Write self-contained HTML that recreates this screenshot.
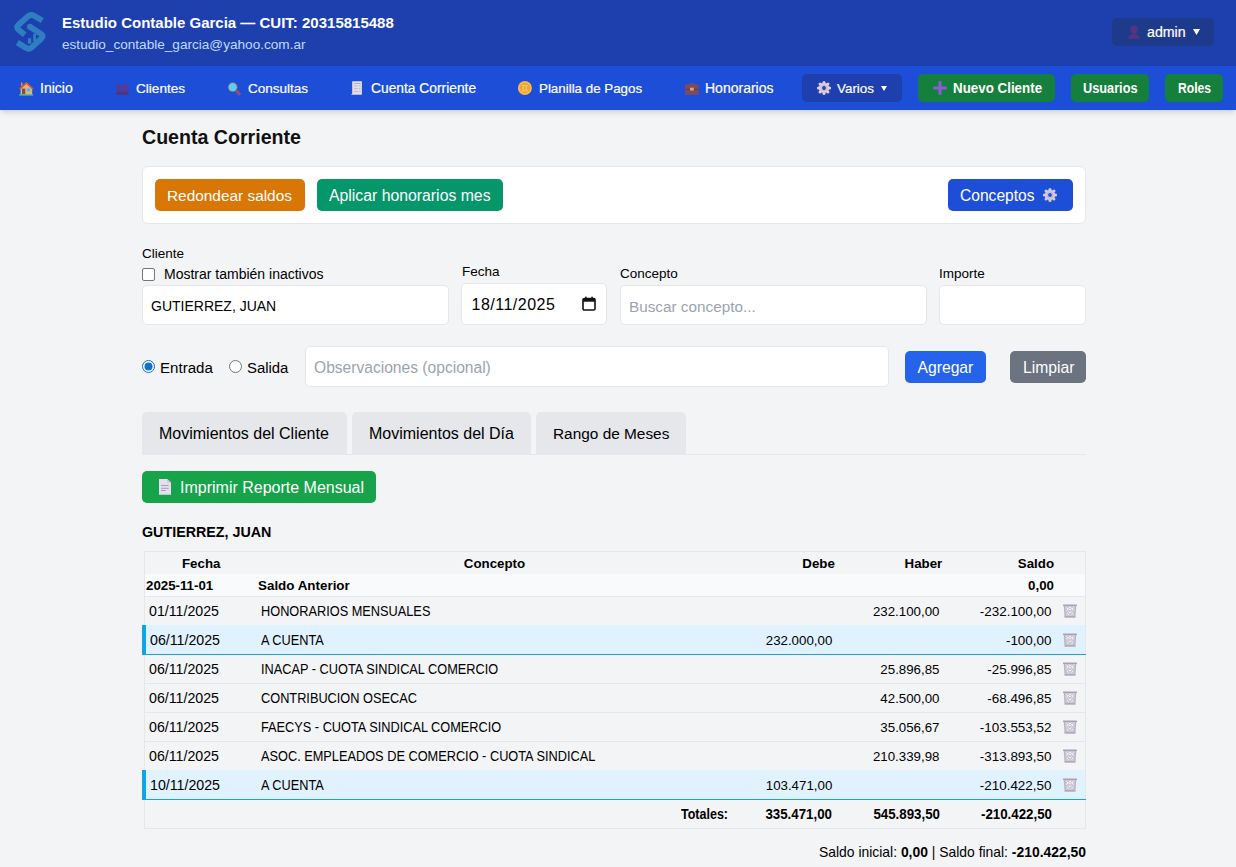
<!DOCTYPE html>
<html><head><meta charset="utf-8">
<style>
*{box-sizing:border-box}
html,body{margin:0;padding:0}
body{width:1236px;height:867px;overflow:hidden;position:relative;background:#f3f4f6;font-family:"Liberation Sans",sans-serif;color:#000}
.a{position:absolute}
.t{position:absolute;white-space:nowrap;line-height:1}
</style></head>
<body>
<div class="a" style="left:0px;top:0px;width:1236px;height:66px;background:#1e40af;"></div>
<svg class="a" style="left:8px;top:8px" width="44" height="48" viewBox="8 8 44 48">
<path d="M 42.32 20.55 L 34.07 15.84 Q 30.77 13.92 27.91 16.43 L 18.56 24.78 Q 15.70 27.29 18.63 29.72 L 24.72 34.78" fill="none" stroke="#2e7fc1" stroke-width="5.8" stroke-linejoin="round"/>
<path d="M 29.89 26.76 L 41.00 33.93 Q 44.19 35.96 41.37 38.51 L 31.72 47.30 Q 28.90 49.87 25.68 47.81 L 17.35 42.49" fill="none" stroke="#2e7fc1" stroke-width="5.8" stroke-linejoin="round"/>
<circle cx="29.89" cy="26.76" r="2.9" fill="#2e7fc1"/>
<rect x="27.9" y="38.2" width="3.3" height="5.5" fill="#2e7fc1"/>
<rect x="33.2" y="33.7" width="2.8" height="7.5" fill="#2e7fc1"/>
</svg>
<div class="t" style="left:62px;top:14.50px;font-size:15px;font-weight:700;color:#fff;">Estudio Contable Garcia — CUIT: 20315815488</div>
<div class="t" style="left:62px;top:37.50px;font-size:13.6px;color:#bfdbfe;">estudio_contable_garcia@yahoo.com.ar</div>
<div class="a" style="left:1112px;top:18px;width:102px;height:28px;background:#1e3a8a;border-radius:5px"></div>
<svg class="a" style="left:1127px;top:25px" width="14" height="14" viewBox="0 0 14 14">
<ellipse cx="7" cy="4.7" rx="3.8" ry="4.2" fill="#553380"/>
<path d="M0.9 13.8 C1.5 10.5 4 9 7 9 C10 9 12.5 10.5 13.1 13.8 Z" fill="#553380"/></svg>
<div class="t" style="left:1147px;top:25.00px;font-size:14.2px;color:#fff;-webkit-text-stroke:0.2px #fff;">admin</div>
<svg class="a" style="left:1193px;top:29px" width="7" height="6" viewBox="0 0 7 6"><path d="M0 0 H7 L3.5 6 Z" fill="#fff"/></svg>
<div class="a" style="left:0px;top:66px;width:1236px;height:44px;background:#1d4ed8;box-shadow:0 4px 6px -1px rgba(0,0,0,.1),0 2px 4px -2px rgba(0,0,0,.1)"></div>
<svg class="a" style="left:19px;top:81.5px" width="15" height="14" viewBox="0 0 15 14">
<rect x="2" y="0.5" width="1.5" height="4" fill="#d9894a"/>
<path d="M1.6 6.5 L7.4 1.2 L13.2 6.5 V12.6 H1.6 Z" fill="#e8b07e"/>
<path d="M0.8 7 L7.4 0.9 L14 7" fill="none" stroke="#e4542c" stroke-width="1.7" stroke-linejoin="round"/>
<rect x="3" y="6.6" width="3.3" height="6" fill="#7b5045"/>
<rect x="7.9" y="6.4" width="3.4" height="2.9" fill="#38bdf8"/>
<rect x="0.2" y="12.2" width="14" height="1.4" rx="0.7" fill="#4ade80"/></svg>
<div class="t" style="left:40px;top:81.00px;font-size:14px;color:#fff;-webkit-text-stroke:0.2px #fff;">Inicio</div>
<svg class="a" style="left:116px;top:84px" width="13" height="11" viewBox="0 0 13 11">
<path d="M0.3 11 V8.6 Q0.3 7.6 1.6 7.4 L3.2 7.2 L4.8 7.4 Q6.2 7.6 6.4 8.6 L6.6 7.6 Q6.8 7.4 8 7.3 L9.7 7.2 L11.2 7.4 Q12.7 7.6 12.7 8.6 V11 Z" fill="#4f3480"/>
<ellipse cx="3.3" cy="3.9" rx="3" ry="3.7" fill="#583a8e"/>
<ellipse cx="9.7" cy="3.9" rx="3" ry="3.7" fill="#583a8e"/>
</svg>
<div class="t" style="left:136px;top:82.00px;font-size:13.6px;color:#fff;-webkit-text-stroke:0.2px #fff;">Clientes</div>
<svg class="a" style="left:226px;top:81px" width="16" height="15" viewBox="0 0 16 15">
<line x1="10" y1="9.5" x2="13.3" y2="13" stroke="#9a4a7a" stroke-width="3" stroke-linecap="round"/>
<circle cx="6.7" cy="6.2" r="4.6" fill="#5ed0e6" stroke="#8b4a7a" stroke-width="0.8"/></svg>
<div class="t" style="left:248px;top:82.00px;font-size:13.5px;color:#fff;-webkit-text-stroke:0.2px #fff;">Consultas</div>
<svg class="a" style="left:351px;top:81px" width="11" height="14" viewBox="0 0 11 14">
<path d="M1.2 0.2 H10.9 V13.7 H0 L1.2 12.5 Z" fill="#e3dce9"/>
<rect x="3" y="2" width="6.5" height="0.8" fill="#a9a3b3"/>
<rect x="3" y="4.5" width="3.8" height="0.8" fill="#b9b3c3"/><rect x="7.8" y="4.5" width="1.7" height="0.8" fill="#b9b3c3"/>
<rect x="3" y="7.3" width="3.8" height="0.8" fill="#b9b3c3"/><rect x="7.8" y="7.3" width="1.7" height="0.8" fill="#b9b3c3"/>
<rect x="3" y="10.1" width="3.8" height="0.8" fill="#b9b3c3"/><rect x="7.8" y="10.1" width="1.7" height="0.8" fill="#b9b3c3"/></svg>
<div class="t" style="left:371px;top:82.00px;font-size:13.8px;color:#fff;-webkit-text-stroke:0.2px #fff;">Cuenta Corriente</div>
<svg class="a" style="left:517px;top:81px" width="16" height="15" viewBox="0 0 16 15">
<circle cx="7.9" cy="7" r="7" fill="#f6bb45"/><circle cx="7.9" cy="7" r="5" fill="#eca23c"/>
<rect x="5" y="4" width="5.8" height="1.2" fill="#f9c64d"/><rect x="5.6" y="5.2" width="1.4" height="3.8" fill="#f9c64d"/>
<rect x="8.6" y="5.2" width="1.4" height="3.8" fill="#f9c64d"/><rect x="4.6" y="9.2" width="6.6" height="1.2" fill="#f9c64d"/></svg>
<div class="t" style="left:539px;top:82.00px;font-size:13.35px;color:#fff;-webkit-text-stroke:0.2px #fff;">Planilla de Pagos</div>
<svg class="a" style="left:685px;top:83px" width="14" height="12" viewBox="0 0 14 12">
<path d="M4.8 2 V0.6 H9 V2" fill="none" stroke="#80505a" stroke-width="1"/>
<rect x="0" y="1.5" width="13.6" height="10.2" rx="0.6" fill="#7d4c5c"/>
<rect x="0.5" y="5.9" width="12.6" height="0.7" fill="#5c2f4a"/>
<rect x="5" y="4.7" width="3.8" height="2.8" fill="#f0a060"/></svg>
<div class="t" style="left:705px;top:81.00px;font-size:14px;color:#fff;-webkit-text-stroke:0.2px #fff;">Honorarios</div>
<div class="a" style="left:802px;top:74px;width:100px;height:28px;background:#1e40af;border-radius:5px"></div>
<svg class="a" style="left:816px;top:80px" width="16" height="16" viewBox="-8 -8 16 16"><g fill="#dccfe0" transform="scale(1.0)">
<circle r="5.1"/><rect x="-1.5" y="-7.1" width="3" height="14.2" rx="1.5"/><rect x="-1.5" y="-7.1" width="3" height="14.2" rx="1.5" transform="rotate(45)"/>
<rect x="-1.5" y="-7.1" width="3" height="14.2" rx="1.5" transform="rotate(90)"/><rect x="-1.5" y="-7.1" width="3" height="14.2" rx="1.5" transform="rotate(135)"/></g>
<circle r="3.1" fill="none" stroke="#c4b6cc" stroke-width="1"/><circle r="1.9" fill="#1e40af"/></svg>
<div class="t" style="left:837px;top:82.00px;font-size:13.4px;color:#fff;-webkit-text-stroke:0.2px #fff;">Varios</div>
<svg class="a" style="left:881px;top:86px" width="6" height="5" viewBox="0 0 6 5"><path d="M0 0 H6 L3 5 Z" fill="#fff"/></svg>
<div class="a" style="left:918px;top:74px;width:137px;height:28px;background:#15803d;border-radius:5px"></div>
<svg class="a" style="left:933px;top:81px" width="14" height="14" viewBox="0 0 14 14">
<rect x="5.5" y="0" width="3" height="14" rx="1.2" fill="#8b5cd6"/><rect x="0" y="5.5" width="14" height="3" rx="1.2" fill="#8b5cd6"/></svg>
<div class="t" style="left:953px;top:81.00px;font-size:14px;font-weight:700;color:#fff;transform:scaleX(0.954);transform-origin:0 0;">Nuevo Cliente</div>
<div class="a" style="left:1071px;top:74px;width:78px;height:28px;background:#15803d;border-radius:5px"></div>
<div class="t" style="left:1083px;top:81.00px;font-size:14px;font-weight:700;color:#fff;transform:scaleX(0.91);transform-origin:0 0;">Usuarios</div>
<div class="a" style="left:1165px;top:74px;width:58px;height:28px;background:#15803d;border-radius:5px"></div>
<div class="t" style="left:1178px;top:81.00px;font-size:14px;font-weight:700;color:#fff;transform:scaleX(0.866);transform-origin:0 0;">Roles</div>
<div class="t" style="left:142px;top:128.00px;font-size:19.6px;font-weight:700;color:#111;">Cuenta Corriente</div>
<div class="a" style="left:142px;top:166px;width:944px;height:58px;background:#fff;border:1px solid #e5e7eb;border-radius:6px"></div>
<div class="a" style="left:155px;top:179px;width:150px;height:32px;background:#d97706;border-radius:5px"></div>
<div class="t" style="left:167px;top:188.00px;font-size:15.4px;color:#fff;">Redondear saldos</div>
<div class="a" style="left:317px;top:179px;width:186px;height:32px;background:#059669;border-radius:5px"></div>
<div class="t" style="left:329px;top:188.00px;font-size:15.8px;color:#fff;">Aplicar honorarios mes</div>
<div class="a" style="left:948px;top:179px;width:125px;height:32px;background:#1d4ed8;border-radius:5px"></div>
<div class="t" style="left:960px;top:188.00px;font-size:15.6px;color:#fff;">Conceptos</div>
<svg class="a" style="left:1042px;top:187px" width="16" height="16" viewBox="-8 -8 16 16"><g fill="#d6cadb" transform="scale(1.0)">
<circle r="5.1"/><rect x="-1.5" y="-7.1" width="3" height="14.2" rx="1.5"/><rect x="-1.5" y="-7.1" width="3" height="14.2" rx="1.5" transform="rotate(45)"/>
<rect x="-1.5" y="-7.1" width="3" height="14.2" rx="1.5" transform="rotate(90)"/><rect x="-1.5" y="-7.1" width="3" height="14.2" rx="1.5" transform="rotate(135)"/></g>
<circle r="3.1" fill="none" stroke="#c4b6cc" stroke-width="1"/><circle r="1.9" fill="#1d4ed8"/></svg>
<div class="t" style="left:142px;top:247.00px;font-size:13.5px;">Cliente</div>
<div class="a" style="left:142px;top:268px;width:13px;height:13px;background:#fff;border:1px solid #767676;border-radius:2px"></div>
<div class="t" style="left:164px;top:267.00px;font-size:14px;">Mostrar también inactivos</div>
<div class="a" style="left:142px;top:285px;width:307px;height:40px;background:#fff;border:1px solid #e5e7eb;border-radius:5px"></div>
<div class="t" style="left:151px;top:299.00px;font-size:14px;">GUTIERREZ, JUAN</div>
<div class="t" style="left:462px;top:265.00px;font-size:13.5px;">Fecha</div>
<div class="a" style="left:461px;top:283px;width:146px;height:42px;background:#fff;border:1px solid #e5e7eb;border-radius:5px"></div>
<div class="t" style="left:471.5px;top:297.00px;font-size:16px;letter-spacing:0.5px;">18/11/2025</div>
<svg class="a" style="left:582px;top:296px" width="14" height="15" viewBox="0 0 14 15">
<rect x="1" y="2.5" width="12" height="11.5" rx="1.3" fill="none" stroke="#111" stroke-width="1.6"/>
<rect x="1" y="2.5" width="12" height="3.2" fill="#111"/>
<rect x="3.2" y="0.6" width="1.4" height="2.4" fill="#111"/><rect x="9.4" y="0.6" width="1.4" height="2.4" fill="#111"/></svg>
<div class="t" style="left:620px;top:267.00px;font-size:13.5px;">Concepto</div>
<div class="a" style="left:620px;top:285px;width:307px;height:40px;background:#fff;border:1px solid #e5e7eb;border-radius:5px"></div>
<div class="t" style="left:629px;top:298.50px;font-size:15.3px;color:#9ca3af;">Buscar concepto...</div>
<div class="t" style="left:939px;top:267.00px;font-size:13.5px;">Importe</div>
<div class="a" style="left:939px;top:285px;width:147px;height:40px;background:#fff;border:1px solid #e5e7eb;border-radius:5px"></div>
<svg class="a" style="left:142px;top:360px" width="13" height="13" viewBox="0 0 13 13">
<circle cx="6.5" cy="6.5" r="6" fill="#fff" stroke="#1170d8" stroke-width="1"/><circle cx="6.5" cy="6.5" r="4" fill="#1170d8"/></svg>
<div class="t" style="left:160px;top:360.00px;font-size:15.1px;">Entrada</div>
<svg class="a" style="left:229px;top:360px" width="13" height="13" viewBox="0 0 13 13">
<circle cx="6.5" cy="6.5" r="6" fill="#fff" stroke="#767676" stroke-width="1"/></svg>
<div class="t" style="left:247px;top:361.00px;font-size:14.9px;">Salida</div>
<div class="a" style="left:305px;top:346px;width:584px;height:41px;background:#fff;border:1px solid #e5e7eb;border-radius:5px"></div>
<div class="t" style="left:314px;top:360.30px;font-size:15.6px;color:#9ca3af;">Observaciones (opcional)</div>
<div class="a" style="left:905px;top:351px;width:81px;height:32px;background:#2563eb;border-radius:5px"></div>
<div class="t" style="left:917.5px;top:360.10px;font-size:15.7px;color:#fff;">Agregar</div>
<div class="a" style="left:1010px;top:351px;width:76px;height:32px;background:#6b7280;border-radius:5px"></div>
<div class="t" style="left:1023px;top:360.10px;font-size:15.7px;color:#fff;">Limpiar</div>
<div class="a" style="left:142px;top:454px;width:944px;height:1px;background:#e5e7eb;"></div>
<div class="a" style="left:142px;top:412px;width:205px;height:42px;background:#e5e7eb;border-radius:5px 5px 0 0"></div>
<div class="t" style="left:159px;top:426.30px;font-size:16px;">Movimientos del Cliente</div>
<div class="a" style="left:352px;top:412px;width:179px;height:42px;background:#e5e7eb;border-radius:5px 5px 0 0"></div>
<div class="t" style="left:369px;top:426.30px;font-size:16px;">Movimientos del Día</div>
<div class="a" style="left:536px;top:412px;width:150px;height:42px;background:#e5e7eb;border-radius:5px 5px 0 0"></div>
<div class="t" style="left:553px;top:426.30px;font-size:15.4px;">Rango de Meses</div>
<div class="a" style="left:142px;top:471px;width:234px;height:32px;background:#16a34a;border-radius:5px"></div>
<svg class="a" style="left:159px;top:479px" width="12" height="16" viewBox="0 0 12 16">
<path d="M0 0 H8.3 L12 3.6 V15.7 H0 Z" fill="#e6def0"/><path d="M8.3 0 V3.6 H12 Z" fill="#c9b8d8"/>
<rect x="2" y="6" width="7.6" height="1" fill="#a8a0b0"/><rect x="2" y="8.8" width="7.6" height="1" fill="#a8a0b0"/><rect x="2" y="11" width="4.8" height="1" fill="#a8a0b0"/></svg>
<div class="t" style="left:180px;top:479.50px;font-size:16px;color:#fff;">Imprimir Reporte Mensual</div>
<div class="t" style="left:142px;top:524.80px;font-size:14.7px;font-weight:700;transform:scaleX(0.973);transform-origin:0 0;">GUTIERREZ, JUAN</div>
<div class="a" style="left:144px;top:551px;width:942px;height:278px;background:transparent;border:1px solid #e5e7eb"></div>
<div class="a" style="left:145px;top:574px;width:940px;height:23px;background:#f9fafb;border-bottom:1px solid #e5e7eb"></div>
<div class="t" style="left:182px;top:556.80px;font-size:13.3px;font-weight:700;">Fecha</div>
<div class="t" style="left:463.8px;top:556.80px;font-size:13.3px;font-weight:700;">Concepto</div>
<div class="t" style="left:734.8px;top:556.80px;font-size:13.3px;font-weight:700;width:100px;text-align:right;">Debe</div>
<div class="t" style="left:842.3px;top:556.80px;font-size:13.3px;font-weight:700;width:100px;text-align:right;">Haber</div>
<div class="t" style="left:954px;top:556.80px;font-size:13.3px;font-weight:700;width:100px;text-align:right;">Saldo</div>
<div class="t" style="left:146px;top:578.80px;font-size:13.7px;font-weight:700;transform:scaleX(0.97);transform-origin:0 0;">2025-11-01</div>
<div class="t" style="left:258px;top:578.80px;font-size:13.4px;font-weight:700;">Saldo Anterior</div>
<div class="t" style="left:954px;top:578.80px;font-size:13.3px;font-weight:700;width:100px;text-align:right;">0,00</div>
<div class="a" style="left:145px;top:597px;width:940px;height:29px;background:transparent;border-bottom:1px solid #e5e7eb"></div>
<div class="t" style="left:149px;top:603.75px;font-size:14.2px;">01/11/2025</div>
<div class="t" style="left:261px;top:603.75px;font-size:14.1px;transform:scaleX(0.905);transform-origin:0 0;">HONORARIOS MENSUALES</div>
<div class="t" style="left:839.5px;top:604.75px;font-size:13.3px;width:100px;text-align:right;">232.100,00</div>
<div class="t" style="left:951.5px;top:604.75px;font-size:13.45px;width:100px;text-align:right;">-232.100,00</div>
<svg class="a" style="left:1063px;top:603.8px" width="14" height="14" viewBox="0 0 14 14"><path d="M0.6 1.2 H13.4 L12.4 13.2 H1.6 Z" fill="#cdc9d4"/><path d="M3.5 3.5 L5 5 L3.5 6.5 M7 3 L8.5 4.5 L7 6 L5.5 4.5 Z M10.5 3.5 L9 5 L10.5 6.5 M5.5 7.5 L7 9 L8.5 7.5 M4 9 L5.5 10.5 M10 9 L8.5 10.5" stroke="#f4f3f6" stroke-width="0.9" fill="none"/><rect x="0" y="0.5" width="14" height="1.6" rx="0.5" fill="#a8a2b6"/><rect x="1.5" y="12.2" width="11" height="1.4" fill="#a8a2b6"/><path d="M1.4 2 L2.3 12.2 M12.6 2 L11.7 12.2" stroke="#b8b2c4" stroke-width="1"/></svg>
<div class="a" style="left:145px;top:625px;width:940px;height:29px;background:#e0f2fe;"></div>
<div class="a" style="left:142px;top:654px;width:944px;height:1px;background:#0ea5e9;"></div>
<div class="a" style="left:142px;top:625px;width:4px;height:30px;background:#0ea5e9;"></div>
<div class="t" style="left:150px;top:632.75px;font-size:14.2px;">06/11/2025</div>
<div class="t" style="left:261px;top:632.75px;font-size:14.1px;transform:scaleX(0.905);transform-origin:0 0;">A CUENTA</div>
<div class="t" style="left:732.3px;top:633.75px;font-size:13.3px;width:100px;text-align:right;">232.000,00</div>
<div class="t" style="left:951.5px;top:633.75px;font-size:13.45px;width:100px;text-align:right;">-100,00</div>
<svg class="a" style="left:1063px;top:632.8px" width="14" height="14" viewBox="0 0 14 14"><path d="M0.6 1.2 H13.4 L12.4 13.2 H1.6 Z" fill="#cdc9d4"/><path d="M3.5 3.5 L5 5 L3.5 6.5 M7 3 L8.5 4.5 L7 6 L5.5 4.5 Z M10.5 3.5 L9 5 L10.5 6.5 M5.5 7.5 L7 9 L8.5 7.5 M4 9 L5.5 10.5 M10 9 L8.5 10.5" stroke="#f4f3f6" stroke-width="0.9" fill="none"/><rect x="0" y="0.5" width="14" height="1.6" rx="0.5" fill="#a8a2b6"/><rect x="1.5" y="12.2" width="11" height="1.4" fill="#a8a2b6"/><path d="M1.4 2 L2.3 12.2 M12.6 2 L11.7 12.2" stroke="#b8b2c4" stroke-width="1"/></svg>
<div class="a" style="left:145px;top:655px;width:940px;height:29px;background:transparent;border-bottom:1px solid #e5e7eb"></div>
<div class="t" style="left:149px;top:661.75px;font-size:14.2px;">06/11/2025</div>
<div class="t" style="left:261px;top:661.75px;font-size:14.1px;transform:scaleX(0.905);transform-origin:0 0;">INACAP - CUOTA SINDICAL COMERCIO</div>
<div class="t" style="left:839.5px;top:662.75px;font-size:13.3px;width:100px;text-align:right;">25.896,85</div>
<div class="t" style="left:951.5px;top:662.75px;font-size:13.45px;width:100px;text-align:right;">-25.996,85</div>
<svg class="a" style="left:1063px;top:661.8px" width="14" height="14" viewBox="0 0 14 14"><path d="M0.6 1.2 H13.4 L12.4 13.2 H1.6 Z" fill="#cdc9d4"/><path d="M3.5 3.5 L5 5 L3.5 6.5 M7 3 L8.5 4.5 L7 6 L5.5 4.5 Z M10.5 3.5 L9 5 L10.5 6.5 M5.5 7.5 L7 9 L8.5 7.5 M4 9 L5.5 10.5 M10 9 L8.5 10.5" stroke="#f4f3f6" stroke-width="0.9" fill="none"/><rect x="0" y="0.5" width="14" height="1.6" rx="0.5" fill="#a8a2b6"/><rect x="1.5" y="12.2" width="11" height="1.4" fill="#a8a2b6"/><path d="M1.4 2 L2.3 12.2 M12.6 2 L11.7 12.2" stroke="#b8b2c4" stroke-width="1"/></svg>
<div class="a" style="left:145px;top:684px;width:940px;height:29px;background:transparent;border-bottom:1px solid #e5e7eb"></div>
<div class="t" style="left:149px;top:690.75px;font-size:14.2px;">06/11/2025</div>
<div class="t" style="left:261px;top:690.75px;font-size:14.1px;transform:scaleX(0.905);transform-origin:0 0;">CONTRIBUCION OSECAC</div>
<div class="t" style="left:839.5px;top:691.75px;font-size:13.3px;width:100px;text-align:right;">42.500,00</div>
<div class="t" style="left:951.5px;top:691.75px;font-size:13.45px;width:100px;text-align:right;">-68.496,85</div>
<svg class="a" style="left:1063px;top:690.8px" width="14" height="14" viewBox="0 0 14 14"><path d="M0.6 1.2 H13.4 L12.4 13.2 H1.6 Z" fill="#cdc9d4"/><path d="M3.5 3.5 L5 5 L3.5 6.5 M7 3 L8.5 4.5 L7 6 L5.5 4.5 Z M10.5 3.5 L9 5 L10.5 6.5 M5.5 7.5 L7 9 L8.5 7.5 M4 9 L5.5 10.5 M10 9 L8.5 10.5" stroke="#f4f3f6" stroke-width="0.9" fill="none"/><rect x="0" y="0.5" width="14" height="1.6" rx="0.5" fill="#a8a2b6"/><rect x="1.5" y="12.2" width="11" height="1.4" fill="#a8a2b6"/><path d="M1.4 2 L2.3 12.2 M12.6 2 L11.7 12.2" stroke="#b8b2c4" stroke-width="1"/></svg>
<div class="a" style="left:145px;top:713px;width:940px;height:29px;background:transparent;border-bottom:1px solid #e5e7eb"></div>
<div class="t" style="left:149px;top:719.75px;font-size:14.2px;">06/11/2025</div>
<div class="t" style="left:261px;top:719.75px;font-size:14.1px;transform:scaleX(0.905);transform-origin:0 0;">FAECYS - CUOTA SINDICAL COMERCIO</div>
<div class="t" style="left:839.5px;top:720.75px;font-size:13.3px;width:100px;text-align:right;">35.056,67</div>
<div class="t" style="left:951.5px;top:720.75px;font-size:13.45px;width:100px;text-align:right;">-103.553,52</div>
<svg class="a" style="left:1063px;top:719.8px" width="14" height="14" viewBox="0 0 14 14"><path d="M0.6 1.2 H13.4 L12.4 13.2 H1.6 Z" fill="#cdc9d4"/><path d="M3.5 3.5 L5 5 L3.5 6.5 M7 3 L8.5 4.5 L7 6 L5.5 4.5 Z M10.5 3.5 L9 5 L10.5 6.5 M5.5 7.5 L7 9 L8.5 7.5 M4 9 L5.5 10.5 M10 9 L8.5 10.5" stroke="#f4f3f6" stroke-width="0.9" fill="none"/><rect x="0" y="0.5" width="14" height="1.6" rx="0.5" fill="#a8a2b6"/><rect x="1.5" y="12.2" width="11" height="1.4" fill="#a8a2b6"/><path d="M1.4 2 L2.3 12.2 M12.6 2 L11.7 12.2" stroke="#b8b2c4" stroke-width="1"/></svg>
<div class="a" style="left:145px;top:742px;width:940px;height:29px;background:transparent;border-bottom:1px solid #e5e7eb"></div>
<div class="t" style="left:149px;top:748.75px;font-size:14.2px;">06/11/2025</div>
<div class="t" style="left:261px;top:748.75px;font-size:14.1px;transform:scaleX(0.905);transform-origin:0 0;">ASOC. EMPLEADOS DE COMERCIO - CUOTA SINDICAL</div>
<div class="t" style="left:839.5px;top:749.75px;font-size:13.3px;width:100px;text-align:right;">210.339,98</div>
<div class="t" style="left:951.5px;top:749.75px;font-size:13.45px;width:100px;text-align:right;">-313.893,50</div>
<svg class="a" style="left:1063px;top:748.8px" width="14" height="14" viewBox="0 0 14 14"><path d="M0.6 1.2 H13.4 L12.4 13.2 H1.6 Z" fill="#cdc9d4"/><path d="M3.5 3.5 L5 5 L3.5 6.5 M7 3 L8.5 4.5 L7 6 L5.5 4.5 Z M10.5 3.5 L9 5 L10.5 6.5 M5.5 7.5 L7 9 L8.5 7.5 M4 9 L5.5 10.5 M10 9 L8.5 10.5" stroke="#f4f3f6" stroke-width="0.9" fill="none"/><rect x="0" y="0.5" width="14" height="1.6" rx="0.5" fill="#a8a2b6"/><rect x="1.5" y="12.2" width="11" height="1.4" fill="#a8a2b6"/><path d="M1.4 2 L2.3 12.2 M12.6 2 L11.7 12.2" stroke="#b8b2c4" stroke-width="1"/></svg>
<div class="a" style="left:145px;top:770px;width:940px;height:29px;background:#e0f2fe;"></div>
<div class="a" style="left:142px;top:799px;width:944px;height:1px;background:#0ea5e9;"></div>
<div class="a" style="left:142px;top:770px;width:4px;height:30px;background:#0ea5e9;"></div>
<div class="t" style="left:150px;top:777.75px;font-size:14.2px;">10/11/2025</div>
<div class="t" style="left:261px;top:777.75px;font-size:14.1px;transform:scaleX(0.905);transform-origin:0 0;">A CUENTA</div>
<div class="t" style="left:732.3px;top:778.75px;font-size:13.3px;width:100px;text-align:right;">103.471,00</div>
<div class="t" style="left:951.5px;top:778.75px;font-size:13.45px;width:100px;text-align:right;">-210.422,50</div>
<svg class="a" style="left:1063px;top:777.8px" width="14" height="14" viewBox="0 0 14 14"><path d="M0.6 1.2 H13.4 L12.4 13.2 H1.6 Z" fill="#cdc9d4"/><path d="M3.5 3.5 L5 5 L3.5 6.5 M7 3 L8.5 4.5 L7 6 L5.5 4.5 Z M10.5 3.5 L9 5 L10.5 6.5 M5.5 7.5 L7 9 L8.5 7.5 M4 9 L5.5 10.5 M10 9 L8.5 10.5" stroke="#f4f3f6" stroke-width="0.9" fill="none"/><rect x="0" y="0.5" width="14" height="1.6" rx="0.5" fill="#a8a2b6"/><rect x="1.5" y="12.2" width="11" height="1.4" fill="#a8a2b6"/><path d="M1.4 2 L2.3 12.2 M12.6 2 L11.7 12.2" stroke="#b8b2c4" stroke-width="1"/></svg>
<div class="t" style="left:681.4px;top:806.75px;font-size:14px;font-weight:700;transform:scaleX(0.893);transform-origin:0 0;">Totales:</div>
<div class="t" style="left:732.3px;top:806.75px;font-size:14px;font-weight:700;width:100px;text-align:right;transform:scaleX(0.95);transform-origin:100% 0;">335.471,00</div>
<div class="t" style="left:839.5px;top:806.75px;font-size:14px;font-weight:700;width:100px;text-align:right;transform:scaleX(0.95);transform-origin:100% 0;">545.893,50</div>
<div class="t" style="left:951.5px;top:806.75px;font-size:14px;font-weight:700;width:100px;text-align:right;transform:scaleX(0.95);transform-origin:100% 0;">-210.422,50</div>
<div class="t" style="left:786px;top:845.50px;font-size:13.9px;text-align:right;width:300px;">Saldo inicial: <b>0,00</b> | Saldo final: <b>-210.422,50</b></div>
</body></html>
